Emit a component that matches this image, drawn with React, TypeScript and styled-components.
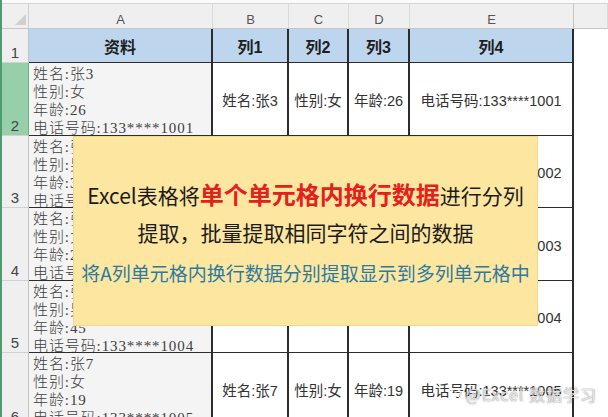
import React from "react";
import styled, { createGlobalStyle } from "styled-components";

const GlobalStyle = createGlobalStyle`
  html, body { margin: 0; padding: 0; background: #ffffff; }
  body { font-family: "Noto Sans CJK SC", "Liberation Sans", sans-serif; }
`;

const Page = styled.div`
  position: relative;
  width: 606px;
  height: 417px;
  overflow: hidden;
  background: #ffffff;
  border-left: 2px solid #4f9a6e;
`;

const Sheet = styled.div`
  display: grid;
  grid-template-columns: 27px 184px 76px 60px 61px 164px 1fr;
  grid-template-rows: 26px 34px 73px 72px 73px 72px 74px;
  padding-top: 3px;
  background: #fafafa;
`;

const Corner = styled.div`
  box-sizing: border-box;
  background: #efefef;
  border-top: 1px solid #d4d4d4;
  border-right: 1px solid #cfcfcf;
  border-bottom: 1px solid #c6c6c6;
  display: flex;
  align-items: flex-end;
  justify-content: flex-end;
  padding: 0 2px 3px 0;
`;

const ColHead = styled.div<{ $edge?: boolean }>`
  box-sizing: border-box;
  background: #efefef;
  border-top: 1px solid #d4d4d4;
  border-right: 1px solid ${(p) => (p.$edge ? "#c4c4c4" : "#dadada")};
  border-bottom: 1px solid #c6c6c6;
  display: flex;
  align-items: flex-end;
  justify-content: center;
  font-family: "Liberation Sans", sans-serif;
  font-size: 13px;
  line-height: 17px;
  color: #555555;
`;

const RowHead = styled.div<{ $active?: boolean }>`
  box-sizing: border-box;
  background: ${(p) => (p.$active ? "#98cfab" : "#efefef")};
  border-right: 1px solid ${(p) => (p.$active ? "#6fae86" : "#c4c4c4")};
  border-bottom: 1px solid #d2d2d2;
  display: flex;
  align-items: flex-end;
  justify-content: center;
  font-family: "Liberation Sans", sans-serif;
  font-size: 15px;
  line-height: 18px;
  color: #444444;
`;

const TitleCell = styled.div`
  box-sizing: border-box;
  background: #bdd6ee;
  border-right: 2px solid #2c2c2c;
  border-bottom: 1px solid #2c2c2c;
  display: flex;
  align-items: center;
  justify-content: center;
  font-family: "Liberation Sans", "Noto Sans CJK SC", sans-serif;
  font-weight: 700;
  font-size: 16px;
  color: #1e1e1e;
`;

const InfoCell = styled.div`
  box-sizing: border-box;
  background: #f4f4f4;
  border-right: 2px solid #2c2c2c;
  border-bottom: 1px solid #2c2c2c;
  padding: 2px 0 0 4px;
  font-family: "Liberation Serif", "Noto Sans CJK SC", serif;
  font-weight: 300;
  font-size: 15px;
  line-height: 18px;
  letter-spacing: 0.9px;
  color: #404040;
  white-space: nowrap;
  overflow: hidden;
`;

const InfoLine = styled.div``;

const ValueCell = styled.div`
  box-sizing: border-box;
  background: #ffffff;
  border-right: 2px solid #2c2c2c;
  border-bottom: 1px solid #2c2c2c;
  display: flex;
  align-items: center;
  justify-content: center;
  font-family: "Liberation Sans", "Noto Sans CJK SC", sans-serif;
  font-size: 14.5px;
  color: #333333;
  white-space: nowrap;
  overflow: hidden;
`;

const Blank = styled.div`
  background: #ffffff;
`;

const Banner = styled.div`
  position: absolute;
  left: 71px;
  top: 136px;
  width: 465px;
  height: 190px;
  box-sizing: border-box;
  background: #fde6a0;
  border: 1px solid #efd893;
  display: flex;
  flex-direction: column;
  align-items: center;
  padding-top: 38px;
  font-family: "Noto Sans CJK SC", sans-serif;
`;

const Headline = styled.div`
  font-size: 21px;
  line-height: 38px;
  height: 38px;
  color: #1c1c1c;
  white-space: nowrap;
`;

const Accent = styled.span`
  color: #e3211c;
  font-weight: 700;
  font-size: 24px;
`;

const Subline = styled.div`
  margin-top: 2px;
  font-size: 19px;
  line-height: 40px;
  color: #2b7aa0;
  white-space: nowrap;
`;

const Watermark = styled.div`
  position: absolute;
  right: 11px;
  bottom: 11px;
  display: flex;
  align-items: center;
  gap: 4px;
  font-family: "Noto Sans CJK SC", sans-serif;
  font-size: 16px;
  letter-spacing: 1px;
  color: rgba(255, 255, 255, 0.8);
  text-shadow: 0 0 1px rgba(0, 0, 0, 0.45), 0 0 2px rgba(0, 0, 0, 0.25);
  white-space: nowrap;
`;

const rows = [
  { n: 2, name: "张3", sex: "女", age: "26", phone: "133****1001" },
  { n: 3, name: "张4", sex: "男", age: "32", phone: "133****1002" },
  { n: 4, name: "张5", sex: "女", age: "28", phone: "133****1003" },
  { n: 5, name: "张6", sex: "男", age: "45", phone: "133****1004" },
  { n: 6, name: "张7", sex: "女", age: "19", phone: "133****1005" },
];

const letters = ["A", "B", "C", "D", "E"];

export default function App() {
  return (
    <Page>
      <GlobalStyle />
      <Sheet>
        <Corner>
          <svg width="11" height="11" viewBox="0 0 11 11">
            <path d="M11 0 L11 11 L0 11 Z" fill="#cfcfcf" />
          </svg>
        </Corner>
        {letters.map((l, i) => (
          <ColHead key={l} $edge={i === 4}>
            {l}
          </ColHead>
        ))}
        <ColHead />

        <RowHead>1</RowHead>
        <TitleCell>资料</TitleCell>
        <TitleCell>列1</TitleCell>
        <TitleCell>列2</TitleCell>
        <TitleCell>列3</TitleCell>
        <TitleCell>列4</TitleCell>
        <Blank />

        {rows.map((r) => (
          <React.Fragment key={r.n}>
            <RowHead $active={r.n === 2}>{r.n}</RowHead>
            <InfoCell>
              <InfoLine>姓名:{r.name}</InfoLine>
              <InfoLine>性别:{r.sex}</InfoLine>
              <InfoLine>年龄:{r.age}</InfoLine>
              <InfoLine>电话号码:{r.phone}</InfoLine>
            </InfoCell>
            <ValueCell>姓名:{r.name}</ValueCell>
            <ValueCell>性别:{r.sex}</ValueCell>
            <ValueCell>年龄:{r.age}</ValueCell>
            <ValueCell>电话号码:{r.phone}</ValueCell>
            <Blank />
          </React.Fragment>
        ))}
      </Sheet>

      <Banner>
        <Headline>
          Excel表格将<Accent>单个单元格内换行数据</Accent>进行分列
        </Headline>
        <Headline>提取，批量提取相同字符之间的数据</Headline>
        <Subline>将A列单元格内换行数据分别提取显示到多列单元格中</Subline>
      </Banner>

      <Watermark>
        <svg width="13" height="13" viewBox="0 0 12 12">
          <circle cx="6" cy="6" r="5" fill="none" stroke="rgba(255,255,255,0.85)" strokeWidth="1.5" />
          <circle cx="6" cy="6" r="2" fill="rgba(255,255,255,0.85)" />
        </svg>
        <span>@Excel 数据学习</span>
      </Watermark>
    </Page>
  );
}
